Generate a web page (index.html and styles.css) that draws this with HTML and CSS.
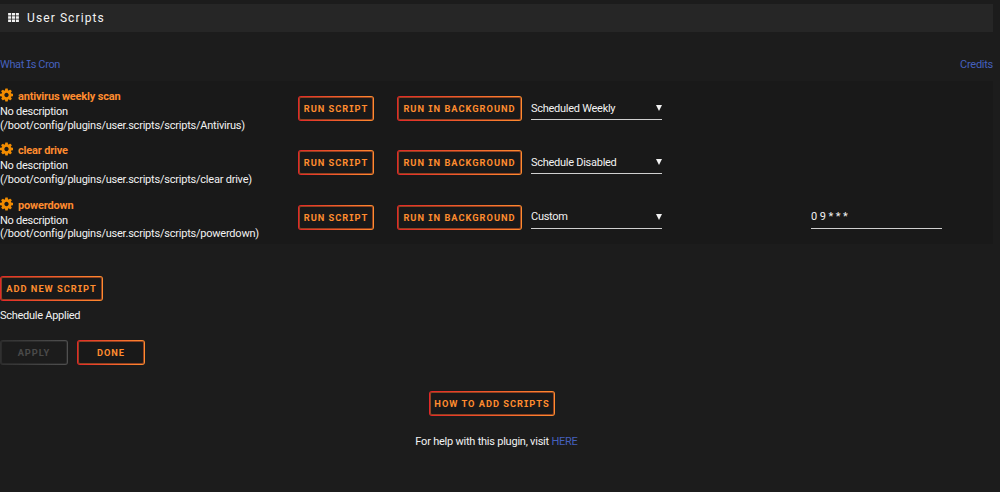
FILE: index.html
```html
<!DOCTYPE html>
<html lang="en">
<head>
    <meta charset="UTF-8">
    <meta name="viewport" content="width=device-width, initial-scale=1.0">
    <title>User Scripts</title>
    <link rel="stylesheet" href="styles.css">
</head>
<body>
<svg class="sprite" width="0" height="0">
    <symbol id="gear" viewBox="0 0 1536 1536">
        <path d="M1024 768q0-106-75-181t-181-75-181 75-75 181 75 181 181 75 181-75 75-181zm512-109v222q0 12-8 23t-20 13l-185 28q-19 54-39 91 35 50 107 138 10 12 10 25t-9 23q-27 37-99 108t-94 71q-12 0-26-9l-138-108q-44 23-91 38-16 136-29 186-7 28-36 28H657q-14 0-24.500-8.500T621 1506l-28-184q-49-16-90-37l-141 107q-10 9-25 9-14 0-25-11-126-114-165-168-7-10-7-23 0-12 8-23 15-21 51-66.500t54-70.500q-27-50-41-99L29 913q-13-2-21-12.500T0 877V655q0-12 8-23t19-13l186-28q14-46 39-92-40-57-107-138-10-12-10-24 0-10 9-23 26-36 98.500-107.500T337 135q13 0 26 10l138 107q44-23 91-38 16-136 29-186 7-28 36-28h222q14 0 24.500 8.500T915 30l28 184q49 16 90 37l142-107q9-9 24-9 13 0 25 10 129 119 165 170 7 8 7 22 0 12-8 23-15 21-51 66.500t-54 70.500q26 50 41 98l183 28q13 2 21 12.500t8 23.500z"/>
    </symbol>
</svg>

<div class="title">
    <svg class="title-icon" viewBox="0 0 12 10">
        <path d="M0 0h3.400v2.700H0zM4.300 0h3.400v2.700H4.300zM8.600 0H12v2.700H8.600zM0 3.600h3.400v2.800H0zM4.300 3.600h3.400v2.800H4.300zM8.600 3.600H12v2.800H8.600zM0 7.300h3.400V10H0zM4.300 7.300h3.400V10H4.300zM8.600 7.300H12V10H8.600z"/>
    </svg>
    <span>User Scripts</span>
</div>

<div class="links">
    <a class="cron-link" href="#">What <span class="serif-i">I</span>s Cron</a>
    <a class="credits-link" href="#">Credits</a>
</div>

<div class="scripts">
    <div class="script-row">
        <div class="script-info">
            <div class="script-name"><svg class="gear"><use href="#gear"/></svg><span>antivirus weekly scan</span></div>
            <div class="desc">No description</div>
            <div class="path">(/boot/config/plugins/user.scripts/scripts/Antivirus)</div>
        </div>
        <button class="btn run">Run Scr<span class="serif-i">i</span>pt</button>
        <button class="btn background">Run <span class="serif-i">I</span>n Background</button>
        <div class="select"><span>Scheduled Weekly</span><i class="arrow"></i></div>
    </div>
    <div class="script-row">
        <div class="script-info">
            <div class="script-name"><svg class="gear"><use href="#gear"/></svg><span>clear drive</span></div>
            <div class="desc">No description</div>
            <div class="path">(/boot/config/plugins/user.scripts/scripts/clear drive)</div>
        </div>
        <button class="btn run">Run Scr<span class="serif-i">i</span>pt</button>
        <button class="btn background">Run <span class="serif-i">I</span>n Background</button>
        <div class="select"><span>Schedule Disabled</span><i class="arrow"></i></div>
    </div>
    <div class="script-row">
        <div class="script-info">
            <div class="script-name"><svg class="gear"><use href="#gear"/></svg><span>powerdown</span></div>
            <div class="desc">No description</div>
            <div class="path">(/boot/config/plugins/user.scripts/scripts/powerdown)</div>
        </div>
        <button class="btn run">Run Scr<span class="serif-i">i</span>pt</button>
        <button class="btn background">Run <span class="serif-i">I</span>n Background</button>
        <div class="select"><span>Custom</span><i class="arrow"></i></div>
        <div class="cron-input">0 9 * * *</div>
    </div>
</div>

<button class="btn add">Add New Scr<span class="serif-i">i</span>pt</button>
<div class="status">Schedule Applied</div>
<div class="actions">
    <button class="btn small" disabled>Apply</button>
    <button class="btn small">Done</button>
</div>

<div class="help">
    <button class="btn howto">How To Add Scr<span class="serif-i">i</span>pts</button>
    <div class="help-text">For help with this plugin, visit <a href="#">HERE</a></div>
</div>
</body>
</html>
```
FILE: styles.css
```css
body {
    font-family: Roboto, "Noto Sans", sans-serif;
    font-size: 11px;
    letter-spacing: -0.27px;
    background-color: #1c1c1c;
    color: #f2f2f2;
    margin: 0;
    padding: 4px 7px 0 0;
    height: 488px;
    box-sizing: border-box;
    overflow: hidden;
}
a {
    color: #4560bd;
    text-decoration: none;
}
.sprite {
    position: absolute;
}
.title {
    display: flex;
    align-items: center;
    height: 28px;
    padding: 0 0 1px 8px;
    box-sizing: border-box;
    background-color: #262626;
    font-size: 12px;
    letter-spacing: 1.1px;
}
.title-icon {
    width: 11px;
    height: 9px;
    margin: 0 8px 1px 0;
    fill: #f2f2f2;
}
.links {
    display: flex;
    justify-content: space-between;
    align-items: baseline;
    height: 49px;
    padding-top: 26px;
    box-sizing: border-box;
    line-height: 14px;
}
.cron-link {
    letter-spacing: -0.38px;
}
.serif-i {
    font-family: Inter, sans-serif;
    font-feature-settings: "cv08", "ss02";
    line-height: 1;
}
.scripts {
    background-color: #191919;
    height: 163px;
}
.script-row {
    display: flex;
    align-items: flex-start;
    height: 54.33px;
}
.script-info {
    width: 298px;
    padding-top: 7px;
    line-height: 13.5px;
    white-space: nowrap;
}
.script-name {
    display: flex;
    align-items: flex-start;
    height: 17px;
    color: #ff8c2f;
    font-weight: bold;
    line-height: 18px;
    letter-spacing: -0.18px;
}
.path {
    letter-spacing: -0.22px;
}
.gear {
    width: 13px;
    height: 14px;
    margin-right: 5px;
    fill: #f28c00;
}
.btn {
    font-family: Roboto, sans-serif;
    font-size: 9.3px;
    font-weight: bold;
    letter-spacing: 0.98px;
    text-transform: uppercase;
    white-space: nowrap;
    color: #ff8c2f;
    height: 25px;
    padding: 0;
    border: 1px solid transparent;
    border-radius: 3px;
    background: linear-gradient(#191919, #191919) padding-box, linear-gradient(90deg, #e22828, #ff8c2f) border-box;
    box-shadow: inset 0 0 0 1px rgba(240, 100, 40, 0.55);
    box-sizing: border-box;
}
.btn .serif-i {
    font-size: 9px;
}
.script-row .btn {
    margin-top: 15px;
}
.run {
    width: 76px;
    margin-right: 23px;
}
.background {
    width: 125px;
    margin-right: 9px;
}
.select,
.cron-input {
    display: flex;
    align-items: center;
    justify-content: space-between;
    width: 131px;
    height: 25px;
    margin-top: 14px;
    padding-top: 2px;
    box-sizing: border-box;
    border-bottom: 1px solid #d0d0d0;
}
.cron-input {
    margin-left: 149px;
    justify-content: flex-start;
    letter-spacing: -0.1px;
}
.arrow {
    width: 0;
    height: 0;
    border-left: 3px solid transparent;
    border-right: 3px solid transparent;
    border-top: 6px solid #f2f2f2;
}
.add {
    display: block;
    width: 103px;
    margin-top: 32px;
}
.status {
    margin-top: 7px;
    line-height: 16px;
}
.actions {
    display: flex;
    gap: 9px;
    margin-top: 16px;
}
.small {
    width: 68px;
}
.btn:disabled {
    color: #4a4a4a;
    background: linear-gradient(#1c1c1c, #1c1c1c) padding-box, linear-gradient(90deg, #303030, #505050) border-box;
    box-shadow: inset 0 0 0 1px rgba(80, 80, 80, 0.3);
}
.help {
    display: flex;
    flex-direction: column;
    align-items: center;
    margin-top: 26px;
}
.howto {
    width: 126px;
    margin-right: 9px;
}
.help-text {
    margin-top: 18px;
    line-height: 16px;
    letter-spacing: -0.23px;
}
```
